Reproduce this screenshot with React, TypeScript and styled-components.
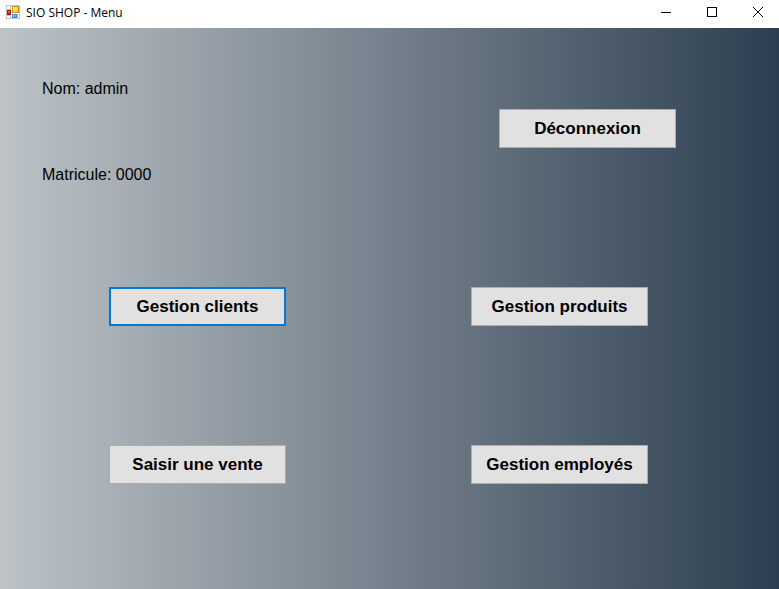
import React from "react";
import styled, { createGlobalStyle } from "styled-components";

const Global = createGlobalStyle`
  * { box-sizing: border-box; }
  html, body, #root { height: 100%; margin: 0; }
  body { font-family: "Liberation Sans", Arial, sans-serif; color: #000; }
`;

const Window = styled.div`
  display: flex;
  flex-direction: column;
  min-height: 100%;
`;

const TitleBar = styled.header`
  display: flex;
  align-items: center;
  height: 28px;
  padding-left: 6px;
  background: #fff;
`;

const AppIcon = styled.svg`
  width: 14px;
  height: 14px;
  margin: 0 6px 4px 0;
`;

const Title = styled.h1`
  flex: 1;
  margin: 0 0 2px;
  font: 400 12px/16px "Open Sans", "Noto Sans", sans-serif;
`;

const WindowControls = styled.div`
  display: flex;
  gap: 4px;
`;

const Caption = styled.button`
  display: flex;
  align-items: center;
  justify-content: center;
  width: 42px;
  height: 24px;
  margin-bottom: 4px;
  padding: 0;
  border: 0;
  background: transparent;
`;

const Content = styled.main`
  flex: 1;
  padding: 51px 103px 104px 42px;
  background: linear-gradient(to right, #bdc3c7, #2c3e50);
`;

const Header = styled.section`
  display: flex;
  justify-content: space-between;
  align-items: flex-start;
`;

const Info = styled.div`
  display: flex;
  flex-direction: column;
  gap: 66px;
`;

const Field = styled.p`
  margin: 0;
  font-size: 16px;
  line-height: 20px;
`;

const Logout = styled.div`
  padding-top: 30px;
`;

const Actions = styled.nav`
  display: grid;
  grid-template-columns: repeat(2, auto);
  justify-content: space-between;
  row-gap: 119px;
  padding: 102px 28px 0 67px;
`;

const Button = styled.button<{ $focused?: boolean }>`
  width: 177px;
  height: 39px;
  padding: 0;
  border: ${(p) => (p.$focused ? "2px solid #0078d7" : "1px solid #adadad")};
  background: #e1e1e1;
  color: #000;
  font: 700 17px/20px "Liberation Sans", Arial, sans-serif;
`;

export default function App() {
  return (
    <Window>
      <Global />
      <TitleBar>
        <AppIcon viewBox="0 0 14 14" shapeRendering="crispEdges" aria-hidden="true">
          <defs>
            <linearGradient id="gold" x1="0" y1="0" x2="1" y2="1">
              <stop offset="0" stopColor="#fff0a0" />
              <stop offset="1" stopColor="#f8c420" />
            </linearGradient>
            <linearGradient id="blue" x1="0" y1="0" x2="1" y2="1">
              <stop offset="0" stopColor="#a8ccff" />
              <stop offset="1" stopColor="#5c98f0" />
            </linearGradient>
          </defs>
          <path fill="#c0c0c0" d="M0 0h14v14H0z" />
          <path fill="#fff" d="M1 1h3v3H1zM1 11h3v2H1zM5 1h1v12H5zM6 8h7v1H6zM12 9h1v4h-1z" />
          <path fill="#a81818" d="M1 5h4v5H1z" />
          <path fill="#e86050" d="M2 6h2v2H2z" />
          <path fill="#c89010" d="M6 1h7v7H6z" />
          <path fill="url(#gold)" d="M7 2h5v5H7z" />
          <path fill="#5088e0" d="M6 9h5v4H6z" />
          <path fill="url(#blue)" d="M7 10h3v2H7z" />
        </AppIcon>
        <Title>SIO SHOP - Menu</Title>
        <WindowControls>
          <Caption aria-label="Réduire">
            <svg width="10" height="10" stroke="#000" shapeRendering="crispEdges"><path d="M0 5.5h10" /></svg>
          </Caption>
          <Caption aria-label="Agrandir">
            <svg width="10" height="10" fill="none" stroke="#000" shapeRendering="crispEdges"><path d="M.5.5h9v9h-9z" /></svg>
          </Caption>
          <Caption aria-label="Fermer">
            <svg width="10" height="10" stroke="#000"><path d="M0 0l10 10M10 0L0 10" /></svg>
          </Caption>
        </WindowControls>
      </TitleBar>
      <Content>
        <Header>
          <Info>
            <Field>Nom: admin</Field>
            <Field>Matricule: 0000</Field>
          </Info>
          <Logout><Button>Déconnexion</Button></Logout>
        </Header>
        <Actions>
          <Button $focused>Gestion clients</Button>
          <Button>Gestion produits</Button>
          <Button>Saisir une vente</Button>
          <Button>Gestion employés</Button>
        </Actions>
      </Content>
    </Window>
  );
}
